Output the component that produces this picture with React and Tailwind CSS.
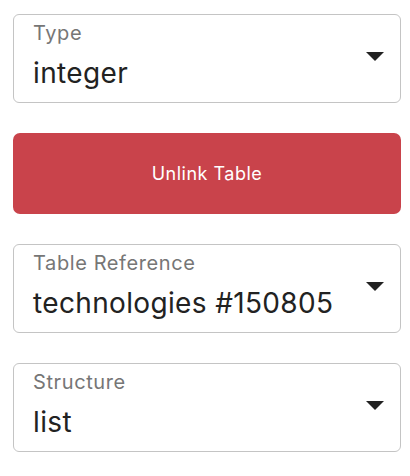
import React from "react";

function Caret() {
  return (
    <svg width="18" height="9" viewBox="0 0 18 9" className="shrink-0">
      <path d="M0 0 L18 0 L9 9 Z" fill="#222222" />
    </svg>
  );
}

function Select({ label, value }) {
  return (
    <div className="flex h-[89px] items-center rounded-[6px] border border-[#c4c4c4] bg-white pl-[19px] pr-[16px]">
      <div className="flex h-full flex-1 flex-col pt-[7px]">
        <div className="text-[20px] leading-[22px] tracking-[0.6px] text-[#767676]">{label}</div>
        <div className="mt-[12px] text-[28px] leading-[34px] tracking-[0.35px] text-[#222222]">{value}</div>
      </div>
      <div className="mb-[4px]">
        <Caret />
      </div>
    </div>
  );
}

export default function App() {
  return (
    <div
      className="flex w-[410px] flex-col gap-[30px] bg-white pl-[13px] pr-[9px] pt-[14px]"
      style={{ fontFamily: "Inter, 'Noto Sans', sans-serif" }}
    >
      <Select label="Type" value="integer" />
      <button className="h-[81px] rounded-[7px] bg-[#c9434b] text-[18px] tracking-[0.5px] text-white">
        Unlink Table
      </button>
      <Select label="Table Reference" value="technologies #150805" />
      <Select label="Structure" value="list" />
    </div>
  );
}
